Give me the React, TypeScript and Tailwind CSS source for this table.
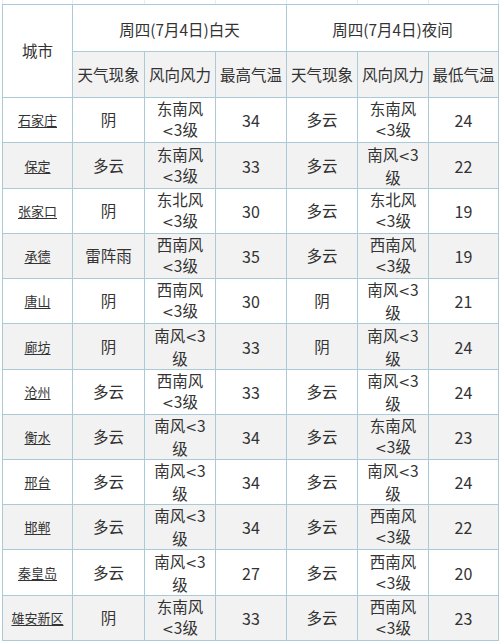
import React from "react";

type Row = {
  city: string;
  dw: string;
  dwind: string;
  hi: string;
  nw: string;
  nwind: string;
  lo: string;
};

const rows: Row[] = [
  { city: "石家庄", dw: "阴", dwind: "东南风", hi: "34", nw: "多云", nwind: "东南风", lo: "24" },
  { city: "保定", dw: "多云", dwind: "东南风", hi: "33", nw: "多云", nwind: "南风", lo: "22" },
  { city: "张家口", dw: "阴", dwind: "东北风", hi: "30", nw: "多云", nwind: "东北风", lo: "19" },
  { city: "承德", dw: "雷阵雨", dwind: "西南风", hi: "35", nw: "多云", nwind: "西南风", lo: "19" },
  { city: "唐山", dw: "阴", dwind: "西南风", hi: "30", nw: "阴", nwind: "南风", lo: "21" },
  { city: "廊坊", dw: "阴", dwind: "南风", hi: "33", nw: "阴", nwind: "南风", lo: "24" },
  { city: "沧州", dw: "多云", dwind: "西南风", hi: "33", nw: "多云", nwind: "南风", lo: "24" },
  { city: "衡水", dw: "多云", dwind: "南风", hi: "34", nw: "多云", nwind: "东南风", lo: "23" },
  { city: "邢台", dw: "多云", dwind: "南风", hi: "34", nw: "多云", nwind: "南风", lo: "24" },
  { city: "邯郸", dw: "多云", dwind: "南风", hi: "34", nw: "多云", nwind: "西南风", lo: "22" },
  { city: "秦皇岛", dw: "多云", dwind: "南风", hi: "27", nw: "多云", nwind: "西南风", lo: "20" },
  { city: "雄安新区", dw: "阴", dwind: "东南风", hi: "33", nw: "多云", nwind: "西南风", lo: "23" },
];

function Lt() {
  return <span style={{ fontFamily: '"DejaVu Sans", sans-serif' }} className="text-[14px]">&lt;</span>;
}

function Wind({ w }: { w: string }) {
  if (w.length === 2) {
    return (
      <div className="flex flex-col items-center leading-[21px]">
        <span>
          {w}
          <Lt />3
        </span>
        <span>级</span>
      </div>
    );
  }
  return (
    <div className="flex flex-col items-center leading-[21px]">
      <span>{w}</span>
      <span>
        <Lt />3级
      </span>
    </div>
  );
}

function Cell({ gray, children }: { gray: boolean; children: React.ReactNode }) {
  return (
    <div
      className={
        gray
          ? "flex items-center justify-center bg-[#f2f2f2] text-center"
          : "flex items-center justify-center bg-white text-center"
      }
    >
      {children}
    </div>
  );
}

export default function App() {
  return (
    <div
      className="w-[500px] h-[641px] bg-white text-[#333333] text-[15.5px] overflow-hidden"
      style={{ fontFamily: '"Noto Sans CJK SC", "Noto Sans", sans-serif' }}
    >
      <div className="ml-[2px] w-[497px] h-[4px] grid grid-cols-[69px_71px_70px_70px_70px_70px_69px] gap-x-[1px] px-[1px] bg-[#e4eff3]">
        {Array.from({ length: 7 }).map((_, i) => (
          <div key={i} className="bg-white" />
        ))}
      </div>
      <div className="ml-[2px] w-[497px] grid grid-cols-[69px_71px_70px_70px_70px_70px_69px] grid-rows-[46px_45px_44px_45px_44px_44px_44px_45px_44px_44px_44px_44px_45px_44px] gap-[1px] p-[1px] bg-[#a9cad6]">
        <div className="row-span-2 flex items-center justify-center bg-white">城市</div>
        <div className="col-span-3 flex items-center justify-center bg-white pt-[3px]">周四(7月4日)白天</div>
        <div className="col-span-3 flex items-center justify-center bg-white pt-[3px]">周四(7月4日)夜间</div>
        <div className="flex items-center justify-center bg-[#f2f2f2]">天气现象</div>
        <div className="flex items-center justify-center bg-[#f2f2f2]">风向风力</div>
        <div className="flex items-center justify-center bg-[#f2f2f2]">最高气温</div>
        <div className="flex items-center justify-center bg-[#f2f2f2]">天气现象</div>
        <div className="flex items-center justify-center bg-[#f2f2f2]">风向风力</div>
        <div className="flex items-center justify-center bg-[#f2f2f2]">最低气温</div>
        {rows.map((r, i) => {
          const gray = i % 2 === 1;
          return (
            <React.Fragment key={r.city}>
              <Cell gray={gray}>
                <span className="text-[13px] underline underline-offset-2">{r.city}</span>
              </Cell>
              <Cell gray={gray}>{r.dw}</Cell>
              <Cell gray={gray}>
                <Wind w={r.dwind} />
              </Cell>
              <Cell gray={gray}>
                <span className="text-[16px]">{r.hi}</span>
              </Cell>
              <Cell gray={gray}>{r.nw}</Cell>
              <Cell gray={gray}>
                <Wind w={r.nwind} />
              </Cell>
              <Cell gray={gray}>
                <span className="text-[16px]">{r.lo}</span>
              </Cell>
            </React.Fragment>
          );
        })}
      </div>
    </div>
  );
}
